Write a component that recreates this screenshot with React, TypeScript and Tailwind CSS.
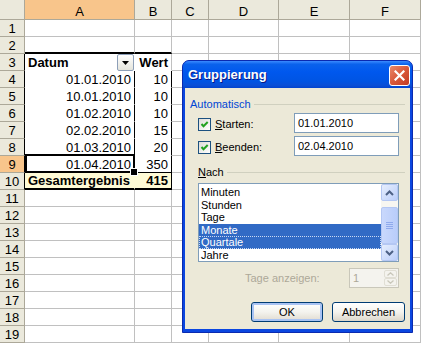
import React from 'react';

const cols = ['A', 'B', 'C', 'D', 'E', 'F'];

const data: Record<number, [string, string]> = {
  4: ['01.01.2010', '10'],
  5: ['10.01.2010', '10'],
  6: ['01.02.2010', '10'],
  7: ['02.02.2010', '15'],
  8: ['01.03.2010', '20'],
  9: ['01.04.2010', '350'],
};

function cellCls(r: number, c: number): string {
  const base = 'flex items-end leading-[15px] px-[3px] whitespace-nowrap overflow-visible border-r border-b';
  if (c === 0) {
    if (r === 2) return base + ' border-b-2 border-r-[#c0c0c0] border-b-black bg-white';
    if (r === 3) return base + ' relative border-r-white border-b-white bg-white font-bold';
    if (r >= 4 && r <= 8) return base + ' border-r-black border-b-white bg-white justify-end';
    if (r === 9) return base + ' relative border-r-black border-b-black bg-white justify-end';
    if (r === 10) return base + ' border-b-2 border-r-[#fffbd6] border-b-black bg-[#fffbd6] font-bold';
  }
  if (c === 1) {
    if (r === 2) return base + ' border-b-2 border-r-[#c0c0c0] border-b-black bg-white';
    if (r === 3) return base + ' border-r-[#c0c0c0] border-b-white bg-white font-bold justify-end';
    if (r >= 4 && r <= 8) return base + ' border-r-black border-b-white bg-white justify-end';
    if (r === 9) return base + ' border-r-black border-b-black bg-white justify-end';
    if (r === 10) return base + ' border-b-2 border-r-black border-b-black bg-[#fffbd6] font-bold justify-end';
  }
  return base + ' border-[#c0c0c0] bg-white';
}

function cellContent(r: number, c: number): React.ReactNode {
  if (r === 3 && c === 0)
    return (
      <>
        <span>Datum</span>
        <div className="absolute right-0 top-0 w-[17px] h-[17px] rounded-[2px] border border-[#8d9fb8] bg-gradient-to-b from-white to-[#e4e4dc] flex items-center justify-center">
          <svg width="7" height="4" viewBox="0 0 7 4">
            <polygon points="0,0 7,0 3.5,4" fill="#000" />
          </svg>
        </div>
      </>
    );
  if (r === 3 && c === 1) return 'Wert';
  if (data[r] && c < 2) {
    const txt = data[r][c];
    if (r === 9 && c === 0)
      return (
        <>
          {txt}
          <div className="absolute z-10 left-0 -right-[1px] -top-[2px] -bottom-[1px] border-2 border-black" />
          <div className="absolute z-10 -right-[3px] -bottom-[3px] w-[6px] h-[6px] bg-black ring-1 ring-white" />
        </>
      );
    return txt;
  }
  if (r === 10 && c === 0) return 'Gesamtergebnis';
  if (r === 10 && c === 1) return '415';
  return null;
}

function rowHeadCls(r: number): string {
  if (r === 9)
    return 'flex items-end justify-center leading-[15px] border-r border-b border-r-black border-b-[#aca899] bg-[#f8c58b]';
  if (r >= 3 && r <= 10)
    return 'flex items-end justify-center leading-[15px] border-r border-b border-r-black border-b-[#aca899] bg-[#ebe9dc]';
  return 'flex items-end justify-center leading-[15px] border-r border-b border-[#aca899] bg-[#ebe9dc]';
}

function CheckBox() {
  return (
    <div className="w-[13px] h-[13px] border border-[#1c5180] bg-gradient-to-br from-[#dcdcd7] to-white flex items-center justify-center">
      <svg width="11" height="11" viewBox="0 0 11 11">
        <path d="M2.5 5 L4.5 7.2 L8.7 3" stroke="#21a121" strokeWidth="2" fill="none" />
      </svg>
    </div>
  );
}

function ScrollBtn({ up }: { up: boolean }) {
  return (
    <div className="h-[17px] w-[17px] rounded-[2px] border border-[#b4c7f3] bg-gradient-to-br from-[#e6eefd] to-[#bccffa] flex items-center justify-center">
      <svg width="9" height="6" viewBox="0 0 9 6">
        {up ? (
          <path d="M1 5 L4.5 1.5 L8 5" stroke="#4d6185" strokeWidth="2" fill="none" />
        ) : (
          <path d="M1 1 L4.5 4.5 L8 1" stroke="#4d6185" strokeWidth="2" fill="none" />
        )}
      </svg>
    </div>
  );
}

const items = ['Minuten', 'Stunden', 'Tage', 'Monate', 'Quartale', 'Jahre'];

function Dialog() {
  return (
    <div className="absolute left-[182px] top-[60px] w-[231px] h-[273px] rounded-t-[7px] border border-[#0a2ab0] bg-[#0a46e0] flex flex-col font-['Liberation_Sans',Arial,sans-serif] text-[11px] text-black">
      {/* Title bar */}
      <div className="h-[27px] rounded-t-[6px] bg-[linear-gradient(to_bottom,#3b8bff_0%,#0a62ec_12%,#0058ee_40%,#0054e3_75%,#0a4fd6_90%,#0244cf_100%)] flex items-start pl-[5px] pr-[2px]">
        <span className="mt-[6px] text-[13px] font-bold text-white leading-[15px] [text-shadow:1px_1px_0_#0a1883]">Gruppierung</span>
        <div className="ml-auto mt-[4px] w-[21px] h-[21px] rounded-[3px] border border-white bg-gradient-to-br from-[#e8896b] via-[#d9583a] to-[#c23a22] flex items-center justify-center">
          <svg width="11" height="11" viewBox="0 0 11 11">
            <path d="M1.5 1.5 L9.5 9.5 M9.5 1.5 L1.5 9.5" stroke="#fff" strokeWidth="2.2" strokeLinecap="square" />
          </svg>
        </div>
      </div>
      {/* Body */}
      <div className="flex-1 mx-[2px] mb-[3px] bg-[#ece9d8] flex flex-col px-[5px]">
        <div className="mt-[10px] h-[13px] flex items-center">
          <span className="text-[#0046d5] leading-[13px]">Automatisch</span>
          <div className="flex-1 ml-[3px] h-px bg-[#d0d0bf]" />
        </div>
        <div className="mt-[2px] h-[20px] flex items-center pl-[8px]">
          <div className="flex items-center mt-[3px]">
            <CheckBox />
            <span className="ml-[4px]">
              <span className="underline">S</span>tarten:
            </span>
          </div>
          <div className="ml-auto mr-[6px] w-[105px] h-[20px] border border-[#7f9db9] bg-white pl-[3px] flex items-center">01.01.2010</div>
        </div>
        <div className="mt-[3px] h-[20px] flex items-center pl-[8px]">
          <div className="flex items-center mt-[3px]">
            <CheckBox />
            <span className="ml-[4px]">
              <span className="underline">B</span>eenden:
            </span>
          </div>
          <div className="ml-auto mr-[6px] w-[105px] h-[20px] border border-[#7f9db9] bg-white pl-[3px] flex items-center">02.04.2010</div>
        </div>
        <div className="mt-[10px] h-[13px] flex items-center pl-[8px]">
          <span className="leading-[13px]">
            <span className="underline">N</span>ach
          </span>
          <div className="flex-1 ml-[3px] h-px bg-[#d0d0bf]" />
        </div>
        <div className="ml-[8px] mt-[4px] w-[201px] h-[79px] border border-[#7f9db9] bg-white flex overflow-hidden">
          <div className="flex-1 flex flex-col pt-[2px]">
            {items.map((it) => {
              const sel = it === 'Monate' || it === 'Quartale';
              const focus = it === 'Quartale';
              return (
                <div
                  key={it}
                  className={
                    sel
                      ? focus
                        ? 'h-[12.5px] leading-[12.5px] pl-[2px] bg-[#316ac5] text-white outline-1 outline-dotted outline-[#c9d8f2] -outline-offset-1'
                        : 'h-[12.5px] leading-[12.5px] pl-[2px] bg-[#316ac5] text-white'
                      : 'h-[12.5px] leading-[12.5px] pl-[2px]'
                  }
                >
                  {it}
                </div>
              );
            })}
          </div>
          <div className="w-[17px] flex flex-col bg-[#f7f6f1]">
            <ScrollBtn up />
            <div className="h-[6px]" />
            <div className="h-[37px] rounded-[2px] border border-[#b4c7f3] bg-gradient-to-r from-[#c9d8fc] to-[#b9cdfa] flex flex-col items-center justify-center gap-[1px]">
              <div className="h-px w-[7px] bg-[#8faaec]" />
              <div className="h-px w-[7px] bg-[#8faaec]" />
              <div className="h-px w-[7px] bg-[#8faaec]" />
              <div className="h-px w-[7px] bg-[#8faaec]" />
            </div>
            <div className="flex-1" />
            <ScrollBtn up={false} />
          </div>
        </div>
        <div className="mt-[6px] h-[20px] flex items-center">
          <span className="ml-[55px] text-[#aca899]">Tage anzeigen:</span>
          <div className="ml-auto mr-[6px] w-[50px] h-[20px] border border-[#c9c7ba] bg-[#f4f3ee] flex">
            <span className="flex-1 pl-[3px] text-[#aca899] flex items-center">1</span>
            <div className="w-[15px] flex flex-col p-px">
              <div className="flex-1 rounded-[2px] border border-[#e0ded4] flex items-center justify-center">
                <svg width="7" height="4" viewBox="0 0 7 4">
                  <path d="M0.5 3.5 L3.5 0.8 L6.5 3.5" stroke="#c9c7ba" strokeWidth="1.3" fill="none" />
                </svg>
              </div>
              <div className="flex-1 rounded-[2px] border border-[#e0ded4] flex items-center justify-center">
                <svg width="7" height="4" viewBox="0 0 7 4">
                  <path d="M0.5 0.5 L3.5 3.2 L6.5 0.5" stroke="#c9c7ba" strokeWidth="1.3" fill="none" />
                </svg>
              </div>
            </div>
          </div>
        </div>
        <div className="mt-[14px] h-[20px] flex justify-end gap-[9px]">
          <div className="w-[72px] h-[20px] rounded-[3px] border border-[#003c74] bg-gradient-to-b from-white via-[#f4f3ee] to-[#e0dbd0] shadow-[inset_0_0_0_2px_#a9c3f3] flex items-center justify-center">
            OK
          </div>
          <div className="w-[73px] h-[20px] rounded-[3px] border border-[#003c74] bg-gradient-to-b from-white via-[#f4f3ee] to-[#dcd6ca] flex items-center justify-center">
            Abbrechen
          </div>
        </div>
      </div>
    </div>
  );
}

export default function App() {
  const rows = Array.from({ length: 19 }, (_, i) => i + 1);
  return (
    <div className="relative w-[421px] h-[344px] overflow-hidden bg-white text-black text-[13px] font-['Liberation_Sans',Arial,sans-serif]">
      <div className="grid grid-cols-[25px_110px_37px_37px_70px_71px_71px] grid-rows-[20px_repeat(19,17px)]">
        <div className="border-r border-b border-[#aca899] bg-[#ebe9dc]" />
        {cols.map((c) => (
          <div
            key={c}
            className={
              c === 'A'
                ? 'flex items-end justify-center leading-[15px] border-r border-b border-[#aca899] bg-[#f8c58b]'
                : 'flex items-end justify-center leading-[15px] border-r border-b border-[#aca899] bg-[#ebe9dc]'
            }
          >
            {c}
          </div>
        ))}
        {rows.map((r) => (
          <React.Fragment key={r}>
            <div className={rowHeadCls(r)}>{r}</div>
            {cols.map((_, c) => (
              <div key={c} className={cellCls(r, c)}>
                {cellContent(r, c)}
              </div>
            ))}
          </React.Fragment>
        ))}
      </div>
      <Dialog />
    </div>
  );
}
